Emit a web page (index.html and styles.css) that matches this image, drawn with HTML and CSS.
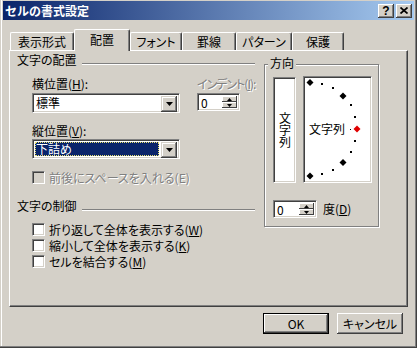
FILE: index.html
```html
<!DOCTYPE html>
<html lang="ja">
<head>
  <meta charset="UTF-8">
  <title>セルの書式設定</title>
  <link rel="stylesheet" href="styles.css">
</head>
<body>
  <div class="window">
    <div class="titlebar">
      <span class="title">セルの書式設定</span>
      <div class="caption-buttons">
        <span class="cap-btn help">?</span>
        <span class="cap-btn">
          <svg width="8" height="7" viewBox="0 0 8 7">
            <path d="M0.5 0.5 L7.5 6.5 M7.5 0.5 L0.5 6.5" stroke="#000" stroke-width="1.7" fill="none"/>
          </svg>
        </span>
      </div>
    </div>

    <div class="client">
      <div class="tabs">
        <div class="tab w64">表示形式</div>
        <div class="tab active">配置</div>
        <div class="tab w52">フォント</div>
        <div class="tab w54">罫線</div>
        <div class="tab w56">パターン</div>
        <div class="tab w52">保護</div>
      </div>

      <div class="panel">
        <div class="left">
          <div class="section-head">
            <span>文字の配置</span>
            <div class="etch"></div>
          </div>

          <div class="align-row">
            <div class="col-combos">
              <div class="label">横位置(<u>H</u>):</div>
              <div class="combo sunken">
                <span class="value">標準</span>
                <span class="drop"><svg width="7" height="4" viewBox="0 0 7 4"><polygon points="0,0 7,0 3.5,4" fill="#000"/></svg></span>
              </div>
              <div class="label gap-top">縦位置(<u>V</u>):</div>
              <div class="combo sunken second">
                <span class="value selected">下詰め</span>
                <span class="drop"><svg width="7" height="4" viewBox="0 0 7 4"><polygon points="0,0 7,0 3.5,4" fill="#000"/></svg></span>
              </div>
            </div>
            <div class="col-indent">
              <div class="label disabled tight">インデント(<u>I</u>):</div>
              <div class="spin sunken">
                <span class="spin-value">0</span>
                <span class="spin-btns">
                  <span class="spin-btn"><svg width="5" height="3" viewBox="0 0 5 3"><polygon points="2.5,0 5,3 0,3" fill="#000"/></svg></span>
                  <span class="spin-btn"><svg width="5" height="3" viewBox="0 0 5 3"><polygon points="0,0 5,0 2.5,3" fill="#000"/></svg></span>
                </span>
              </div>
            </div>
          </div>

          <div class="check disabled-row">
            <span class="box sunken off"></span>
            <span class="disabled">前後にスペースを入れる(E)</span>
          </div>

          <div class="section-head second-head">
            <span>文字の制御</span>
            <div class="etch"></div>
          </div>

          <div class="checks">
            <div class="check"><span class="box sunken"></span><span>折り返して全体を表示する(<u>W</u>)</span></div>
            <div class="check"><span class="box sunken"></span><span>縮小して全体を表示する(<u>K</u>)</span></div>
            <div class="check"><span class="box sunken"></span><span>セルを結合する(<u>M</u>)</span></div>
          </div>
        </div>

        <div class="orient">
          <span class="legend">方向</span>
          <div class="orient-row">
            <div class="vbox sunken"><span>文字列</span></div>
            <div class="dial sunken">
              <svg width="67" height="105" viewBox="0 0 67 105">
                <g fill="#000">
                  <polygon points="6,2 9.5,5.5 6,9 2.5,5.5"/>
                  <polygon points="39,15.5 42.5,19 39,22.5 35.5,19"/>
                  <polygon points="39,82 42.5,85.5 39,89 35.5,85.5"/>
                  <polygon points="6,95.5 9.5,99 6,102.5 2.5,99"/>
                  <rect x="17" y="6" width="2" height="2"/>
                  <rect x="28" y="10" width="2" height="2"/>
                  <rect x="46" y="27" width="2" height="2"/>
                  <rect x="50" y="39" width="2" height="2"/>
                  <rect x="50" y="63" width="2" height="2"/>
                  <rect x="46" y="74" width="2" height="2"/>
                  <rect x="28" y="92" width="2" height="2"/>
                  <rect x="17" y="96" width="2" height="2"/>
                  <rect x="46" y="52" width="1" height="1"/>
                  <text x="5" y="57" font-size="12" font-family="Noto Sans CJK JP, sans-serif">文字列</text>
                </g>
                <polygon points="53,48.5 56.5,52 53,55.5 49.5,52" fill="#e00000"/>
              </svg>
            </div>
          </div>
          <div class="deg-row">
            <div class="spin sunken wide">
              <span class="spin-value">0</span>
              <span class="spin-btns">
                <span class="spin-btn"><svg width="5" height="3" viewBox="0 0 5 3"><polygon points="2.5,0 5,3 0,3" fill="#000"/></svg></span>
                <span class="spin-btn"><svg width="5" height="3" viewBox="0 0 5 3"><polygon points="0,0 5,0 2.5,3" fill="#000"/></svg></span>
              </span>
            </div>
            <span class="deg-label">度(<u>D</u>)</span>
          </div>
        </div>
      </div>

      <div class="buttons">
        <div class="btn default">OK</div>
        <div class="btn">キャンセル</div>
      </div>
    </div>
  </div>
</body>
</html>
```

FILE: styles.css
```css
* {
  box-sizing: border-box;
}

body {
  margin: 0;
  font-family: "Noto Sans CJK JP", sans-serif;
  font-size: 12px;
  line-height: 12px;
  font-feature-settings: "palt";
  background-color: #d4d0c8;
  color: #000;
}

u {
  text-decoration: underline;
  text-underline-offset: 1px;
}

.window {
  width: 417px;
  height: 348px;
  padding: 1px 3px 2px 3px;
  background-color: #d4d0c8;
  box-shadow: inset -1px -1px #404040, inset -2px -2px #808080, inset 1px 0 #d4d0c8, inset 2px 0 #fff;
}

/* title bar */
.titlebar {
  height: 19px;
  display: flex;
  align-items: center;
  justify-content: space-between;
  padding: 0 2px;
  background: linear-gradient(to right, #0a246a, #a6caf0);
}

.title {
  color: #fff;
  font-weight: bold;
  font-feature-settings: normal;
}

.caption-buttons {
  display: flex;
  gap: 2px;
}

.cap-btn {
  width: 16px;
  height: 14px;
  display: flex;
  align-items: center;
  justify-content: center;
  background-color: #d4d0c8;
  box-shadow: inset -1px -1px #404040, inset 1px 1px #fff, inset -2px -2px #808080;
}

.cap-btn.help {
  font-family: "Liberation Sans", sans-serif;
  font-weight: bold;
  font-size: 12px;
  padding-top: 1px;
}

/* tabs */
.client {
  padding: 9px 6px 0 6px;
}

.tabs {
  display: flex;
  align-items: flex-end;
  height: 21px;
  padding-left: 1px;
}

.tab {
  height: 18px;
  display: flex;
  align-items: center;
  justify-content: center;
  border: 1px solid;
  border-bottom: 0;
  border-color: #fff #404040 #fff #fff;
  border-radius: 2px 2px 0 0;
  box-shadow: inset -1px 0 #808080;
  padding-top: 1px;
}

.w64 { width: 64px; }
.w52 { width: 52px; }
.w54 { width: 54px; }
.w56 { width: 56px; }

.tab.active {
  width: 56px;
  height: 22px;
  margin-bottom: -1px;
  position: relative;
  z-index: 1;
  background-color: #d4d0c8;
  padding-bottom: 2px;
}

/* panel */
.panel {
  width: 399px;
  height: 257px;
  display: flex;
  border: 1px solid;
  border-color: #fff #404040 #404040 #fff;
  box-shadow: inset -1px -1px #808080;
  padding: 3px 0 0 7px;
}

.left {
  width: 238px;
}

.section-head {
  display: flex;
  height: 12px;
}

.etch {
  flex: 1;
  height: 2px;
  margin: 9px 0 0 5px;
  border-top: 1px solid #808080;
  border-bottom: 1px solid #fff;
}

.second-head {
  margin-top: 16px;
}

.align-row {
  display: flex;
  margin-top: 12px;
  padding-left: 15px;
}

.col-combos {
  width: 148px;
}

.col-indent {
  margin-left: 17px;
}

.label {
  height: 12px;
  white-space: nowrap;
}

.label.tight {
  letter-spacing: -1px;
}

.gap-top {
  margin-top: 12px;
}

.disabled {
  color: #808080;
  text-shadow: 1px 1px #fff;
}

.sunken {
  border: 1px solid;
  border-color: #808080 #fff #fff #808080;
  box-shadow: inset 1px 1px #404040, inset -1px -1px #d4d0c8;
  background-color: #fff;
}

.combo {
  width: 148px;
  height: 20px;
  margin-top: 3px;
  display: flex;
  padding: 1px;
}

.combo.second {
  margin-top: 2px;
}

.combo .value {
  flex: 1;
  display: flex;
  align-items: center;
  margin: 1px 2px 1px 1px;
  padding-left: 1px;
}

.combo .value.selected {
  background-color: #0a246a;
  color: #fff;
  outline: 1px dotted #e8e070;
  outline-offset: -1px;
}

.drop {
  width: 16px;
  height: 16px;
  display: flex;
  align-items: center;
  justify-content: center;
  margin: 1px 1px 1px 0;
  background-color: #d4d0c8;
  box-shadow: inset -1px -1px #404040, inset 1px 1px #d4d0c8, inset -2px -2px #808080, inset 2px 2px #fff;
}

.drop svg,
.spin-btn svg {
  display: block;
}

/* spin boxes */
.spin {
  width: 43px;
  height: 18px;
  margin-top: 3px;
  display: flex;
  padding: 1px;
}

.spin.wide {
  width: 44px;
  margin-top: 0;
}

.spin-value {
  flex: 1;
  padding: 2px 0 0 2px;
}

.spin-btns {
  width: 15px;
  display: flex;
  flex-direction: column;
  margin: 1px 1px 1px 0;
}

.spin-btn {
  flex: 1;
  display: flex;
  align-items: center;
  justify-content: center;
  background-color: #d4d0c8;
  box-shadow: inset -1px -1px #404040, inset 1px 1px #fff;
}

/* checkboxes */
.check {
  display: flex;
  align-items: center;
  gap: 4px;
  height: 13px;
  padding-left: 15px;
  white-space: nowrap;
}

.disabled-row {
  margin-top: 12px;
}

.box {
  width: 13px;
  height: 13px;
  flex: none;
}

.box.off {
  background-color: #d4d0c8;
}

.checks {
  margin-top: 11px;
  display: flex;
  flex-direction: column;
  gap: 3px;
}

/* orientation group */
.orient {
  position: relative;
  width: 115px;
  height: 163px;
  margin: 10px 0 0 9px;
  padding: 11px 0 0 8px;
  border: 1px solid #808080;
  box-shadow: 1px 1px 0 #fff, inset 1px 1px 0 #fff;
}

.legend {
  position: absolute;
  top: -8px;
  left: 3px;
  padding: 0 2px;
  background-color: #d4d0c8;
}

.orient-row {
  display: flex;
  align-items: flex-start;
}

.vbox {
  width: 23px;
  height: 106px;
  margin-top: 1px;
  display: flex;
  align-items: center;
  justify-content: center;
}

.vbox span {
  writing-mode: vertical-rl;
  text-orientation: upright;
  font-feature-settings: normal;
  line-height: 12px;
}

.dial {
  width: 69px;
  height: 107px;
  margin-left: 7px;
}

.dial svg {
  display: block;
}

.deg-row {
  display: flex;
  align-items: center;
  margin-top: 17px;
}

.deg-label {
  margin-left: 6px;
}

/* dialog buttons */
.buttons {
  display: flex;
  justify-content: flex-end;
  gap: 8px;
  margin-top: 6px;
  padding-right: 5px;
}

.btn {
  width: 66px;
  height: 21px;
  display: flex;
  align-items: center;
  justify-content: center;
  background-color: #d4d0c8;
  box-shadow: inset -1px -1px #404040, inset 1px 1px #fff, inset -2px -2px #808080;
}

.btn.default {
  border: 1px solid #000;
}
```
